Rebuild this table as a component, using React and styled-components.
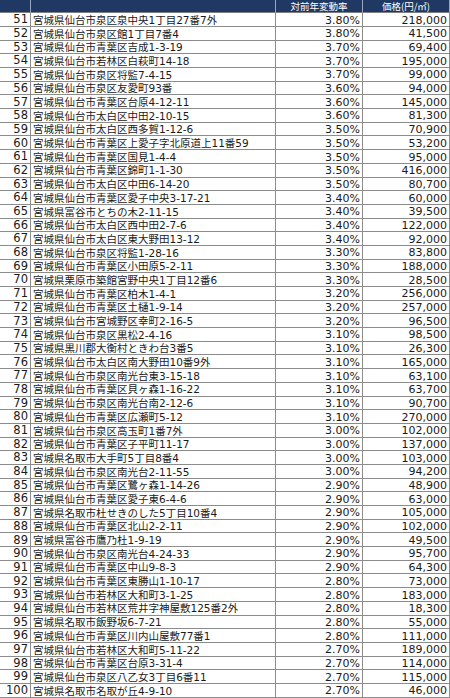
import React from "react";
import styled, { createGlobalStyle } from "styled-components";

const GlobalStyle = createGlobalStyle`
  html, body { margin: 0; padding: 0; background: #ffffff; }
  body { font-family: "DejaVu Sans", "Noto Sans CJK JP", sans-serif; }
`;

const rows = [
  [51, "宮城県仙台市泉区泉中央1丁目27番7外", "3.80%", "218,000"],
  [52, "宮城県仙台市泉区館1丁目7番4", "3.80%", "41,500"],
  [53, "宮城県仙台市青葉区吉成1-3-19", "3.70%", "69,400"],
  [54, "宮城県仙台市若林区白萩町14-18", "3.70%", "195,000"],
  [55, "宮城県仙台市泉区将監7-4-15", "3.70%", "99,000"],
  [56, "宮城県仙台市泉区友愛町93番", "3.60%", "94,000"],
  [57, "宮城県仙台市青葉区台原4-12-11", "3.60%", "145,000"],
  [58, "宮城県仙台市太白区中田2-10-15", "3.60%", "81,300"],
  [59, "宮城県仙台市太白区西多賀1-12-6", "3.50%", "70,900"],
  [60, "宮城県仙台市青葉区上愛子字北原道上11番59", "3.50%", "53,200"],
  [61, "宮城県仙台市青葉区国見1-4-4", "3.50%", "95,000"],
  [62, "宮城県仙台市青葉区錦町1-1-30", "3.50%", "416,000"],
  [63, "宮城県仙台市太白区中田6-14-20", "3.50%", "80,700"],
  [64, "宮城県仙台市青葉区愛子中央3-17-21", "3.40%", "60,000"],
  [65, "宮城県富谷市とちの木2-11-15", "3.40%", "39,500"],
  [66, "宮城県仙台市太白区西中田2-7-6", "3.40%", "122,000"],
  [67, "宮城県仙台市太白区東大野田13-12", "3.40%", "92,000"],
  [68, "宮城県仙台市泉区将監1-28-16", "3.30%", "83,800"],
  [69, "宮城県仙台市青葉区小田原5-2-11", "3.30%", "188,000"],
  [70, "宮城県栗原市築館宮野中央1丁目12番6", "3.30%", "28,500"],
  [71, "宮城県仙台市青葉区柏木1-4-1", "3.20%", "256,000"],
  [72, "宮城県仙台市青葉区土樋1-9-14", "3.20%", "257,000"],
  [73, "宮城県仙台市宮城野区幸町2-16-5", "3.20%", "96,500"],
  [74, "宮城県仙台市泉区黒松2-4-16", "3.10%", "98,500"],
  [75, "宮城県黒川郡大衡村ときわ台3番5", "3.10%", "26,300"],
  [76, "宮城県仙台市太白区南大野田10番9外", "3.10%", "165,000"],
  [77, "宮城県仙台市泉区南光台東3-15-18", "3.10%", "63,100"],
  [78, "宮城県仙台市青葉区貝ヶ森1-16-22", "3.10%", "63,700"],
  [79, "宮城県仙台市泉区南光台南2-12-6", "3.10%", "90,700"],
  [80, "宮城県仙台市青葉区広瀬町5-12", "3.10%", "270,000"],
  [81, "宮城県仙台市泉区高玉町1番7外", "3.00%", "102,000"],
  [82, "宮城県仙台市青葉区子平町11-17", "3.00%", "137,000"],
  [83, "宮城県名取市大手町5丁目8番4", "3.00%", "103,000"],
  [84, "宮城県仙台市泉区南光台2-11-55", "3.00%", "94,200"],
  [85, "宮城県仙台市青葉区鷺ヶ森1-14-26", "2.90%", "48,900"],
  [86, "宮城県仙台市青葉区愛子東6-4-6", "2.90%", "63,000"],
  [87, "宮城県名取市杜せきのした5丁目10番4", "2.90%", "105,000"],
  [88, "宮城県仙台市青葉区北山2-2-11", "2.90%", "102,000"],
  [89, "宮城県富谷市鷹乃杜1-9-19", "2.90%", "49,500"],
  [90, "宮城県仙台市泉区南光台4-24-33", "2.90%", "95,700"],
  [91, "宮城県仙台市青葉区中山9-8-3", "2.90%", "64,300"],
  [92, "宮城県仙台市青葉区東勝山1-10-17", "2.80%", "73,000"],
  [93, "宮城県仙台市若林区大和町3-1-25", "2.80%", "183,000"],
  [94, "宮城県仙台市若林区荒井字神屋敷125番2外", "2.80%", "18,300"],
  [95, "宮城県名取市飯野坂6-7-21", "2.80%", "55,000"],
  [96, "宮城県仙台市青葉区川内山屋敷77番1", "2.80%", "111,000"],
  [97, "宮城県仙台市若林区大和町5-11-22", "2.70%", "189,000"],
  [98, "宮城県仙台市青葉区台原3-31-4", "2.70%", "114,000"],
  [99, "宮城県仙台市泉区八乙女3丁目6番11", "2.70%", "115,000"],
  [100, "宮城県名取市名取が丘4-9-10", "2.70%", "46,000"],
];

const Table = styled.div`
  display: grid;
  grid-template-columns: 31px 245px 87px 87px;
  grid-template-rows: 13.3px;
  grid-auto-rows: 13.69px;
  width: 450px;
  color: #1a1a1a;
`;

const HeadCell = styled.div`
  box-sizing: border-box;
  background: #1f3864;
  color: #ffffff;
  font-family: "Noto Sans CJK JP", sans-serif;
  font-size: 9.5px;
  line-height: 12px;
  display: flex;
  align-items: center;
  justify-content: center;
  white-space: nowrap;
  border-right: 1px solid #9aa6bd;
  border-bottom: 1px solid #7f7f7f;
  &:last-child { border-right: 1px solid #1f3864; }
`;

const Cell = styled.div`
  box-sizing: border-box;
  display: flex;
  align-items: center;
  justify-content: ${(p) => (p.$align === "right" ? "flex-end" : "flex-start")};
  padding: 1px ${(p) => (p.$align === "right" ? "2px" : "0")} 0 ${(p) => (p.$align === "right" ? "0" : "2px")};
  font-size: ${(p) => p.$size || 11}px;
  line-height: 1;
  white-space: nowrap;
  overflow: hidden;
  border-right: 1px solid #8c8c8c;
  border-bottom: 1px solid #8c8c8c;
`;

export default function App() {
  return (
    <>
      <GlobalStyle />
      <Table>
        <HeadCell />
        <HeadCell />
        <HeadCell>対前年変動率</HeadCell>
        <HeadCell>価格(円/㎡)</HeadCell>
        {rows.map(([no, addr, rate, price]) => (
          <React.Fragment key={no}>
            <Cell $align="right" $size={11.5}>{no}</Cell>
            <Cell $size={10.5}>{addr}</Cell>
            <Cell $align="right" $size={11}>{rate}</Cell>
            <Cell $align="right" $size={11}>{price}</Cell>
          </React.Fragment>
        ))}
      </Table>
    </>
  );
}
